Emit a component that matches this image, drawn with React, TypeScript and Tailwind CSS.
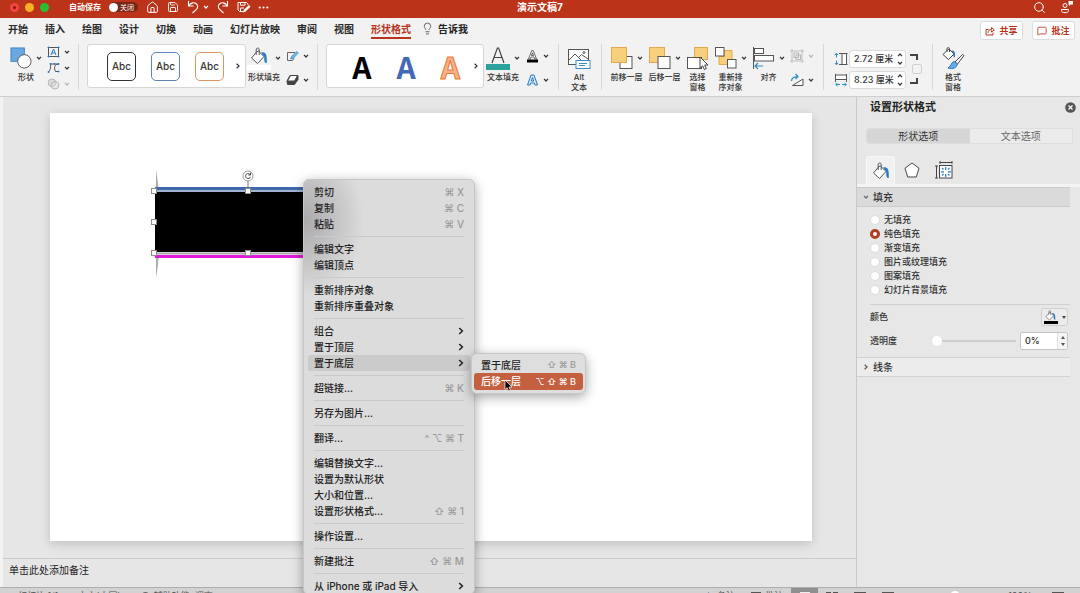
import React, { Fragment, ReactNode } from "react";
import {
  Ellipsis,
  House,
  Lightbulb,
  MessageSquare,
  Save,
  Search,
} from "lucide-react";

type MenuEntry = {
  label: string;
  keys?: string;
  submenu?: boolean;
  active?: boolean;
};

const tabs = [
  "开始",
  "插入",
  "绘图",
  "设计",
  "切换",
  "动画",
  "幻灯片放映",
  "审阅",
  "视图",
  "形状格式",
];

const menuGroups: MenuEntry[][] = [
  [
    { label: "剪切", keys: "⌘ X" },
    { label: "复制", keys: "⌘ C" },
    { label: "粘贴", keys: "⌘ V" },
  ],
  [{ label: "编辑文字" }, { label: "编辑顶点" }],
  [{ label: "重新排序对象" }, { label: "重新排序重叠对象" }],
  [
    { label: "组合", submenu: true },
    { label: "置于顶层", submenu: true },
    { label: "置于底层", submenu: true, active: true },
  ],
  [{ label: "超链接...", keys: "⌘ K" }],
  [{ label: "另存为图片..." }],
  [{ label: "翻译...", keys: "^ ⌥ ⌘ T" }],
  [
    { label: "编辑替换文字..." },
    { label: "设置为默认形状" },
    { label: "大小和位置..." },
    { label: "设置形状格式...", keys: "⇧ ⌘ 1" },
  ],
  [{ label: "操作设置..." }],
  [{ label: "新建批注", keys: "⇧ ⌘ M" }],
  [{ label: "从 iPhone 或 iPad 导入", submenu: true }],
];

const fillOptions = [
  "无填充",
  "纯色填充",
  "渐变填充",
  "图片或纹理填充",
  "图案填充",
  "幻灯片背景填充",
];

const Chevron = ({ className = "" }: { className?: string }) => (
  <svg viewBox="0 0 6 6" className={`h-1.5 w-1.5 shrink-0 ${className}`} fill="none" stroke="currentColor" strokeWidth="1.2">
    <path d="M1 1.8 3 4l2-2.2" />
  </svg>
);

const ChevronRight = ({ className = "" }: { className?: string }) => (
  <svg viewBox="0 0 6 8" className={`h-2 w-1.5 shrink-0 ${className}`} fill="none" stroke="currentColor" strokeWidth="1.5">
    <path d="M1.2 1 4.4 4 1.2 7" />
  </svg>
);

const Divider = () => <div className="h-[46px] w-px shrink-0 bg-[#d8d8d8]" />;

const BigTool = ({ label, children, arrow = true }: { label: string; children: ReactNode; arrow?: boolean }) => (
  <button className="flex shrink-0 flex-col items-center pt-0.5">
    <span className="flex h-6 items-center gap-1">
      {children}
      {arrow && <Chevron />}
    </span>
    <span className="mt-0.5 whitespace-pre text-[8px] font-medium leading-[10px]">{label}</span>
  </button>
);

const SmallTool = ({ name, children, muted }: { name: string; children: ReactNode; muted?: boolean }) => (
  <button aria-label={name} className={`flex flex-1 items-center gap-1 ${muted ? "text-[#b5b5b5]" : ""}`}>
    {children}
    <Chevron />
  </button>
);

const Bucket = ({ className }: { className: string }) => (
  <svg viewBox="0 0 18 18" className={className} fill="none">
    <path d="M7 4.5 1.5 11 7.5 16.5 14 9.5 8.6 4.2Z" fill="#fff" stroke="#555" strokeWidth="1" />
    <path d="M6.2 8V2.8c0-2.4 3-2.4 3 0V8" stroke="#555" strokeWidth="1" />
    <path d="M11 5.5c4.500-1.500 6.300 1.500 5.800 10.500-2 0-2.800-1-2.600-6.500Z" fill="#2b7cc4" />
  </svg>
);

const TitleBar = () => (
  <header className="grid h-[18px] shrink-0 grid-cols-[1fr_auto_1fr] items-center bg-[#bb341a] pb-1.5 text-white">
    <div className="flex items-center pl-2.5">
      <span className="flex gap-1.5">
        <span className="flex size-[9px] items-center justify-center rounded-full bg-[#f4443f]">
          <span className="size-[3px] rounded-full bg-[#7d1712]" />
        </span>
        <span className="size-[9px] rounded-full bg-[#fbb024]" />
        <span className="size-[9px] rounded-full bg-[#28bd35]" />
      </span>
      <span className="ml-5 text-[8px] font-bold leading-3">自动保存</span>
      <button role="switch" aria-checked="false" aria-label="自动保存" className="ml-2 flex h-2.5 w-[29px] items-center gap-0.5 rounded-full bg-[#7a2614]">
        <span className="size-[9px] rounded-full bg-white" />
        <span className="text-[7px] leading-[9px]">关闭</span>
      </button>
      <button aria-label="主页" className="ml-2"><House size={13} strokeWidth={1.8} /></button>
      <button aria-label="保存" className="ml-2"><Save size={12} strokeWidth={1.8} /></button>
      <button aria-label="撤消" className="ml-2">
        <svg viewBox="0 0 12 14" className="h-3.5 w-3" fill="none" stroke="currentColor" strokeWidth="1.100">
          <path d="M1.500 1v5h5M1.800 5.800C4 2.500 7 2 9 3.500s2.300 4 .5 5.800L5.500 13" />
        </svg>
      </button>
      <Chevron className="ml-1" />
      <button aria-label="重做" className="ml-2">
        <svg viewBox="0 0 12 14" className="h-3.5 w-3" fill="none" stroke="currentColor" strokeWidth="1.100">
          <path d="M10.500 1v5h-5M10.200 5.800C8 2.500 5 2 3 3.500s-2.300 4-.5 5.800L6.500 13" />
        </svg>
      </button>
      <button aria-label="另存为" className="ml-2">
        <svg viewBox="0 0 14 12" className="h-3 w-3.5" fill="none" stroke="currentColor">
          <path d="M6 10.500H2.500L1 9V1.500h8.500l1.500 1.500v1M3.500 1.500v2.700h4.500V1.500M3.500 10V7H7" />
          <path d="M6 11.500 6.800 8.800 12 4l1.500 1.700-5.200 5Z" fill="currentColor" stroke="none" />
        </svg>
      </button>
      <button aria-label="更多" className="ml-1.5"><Ellipsis size={13} /></button>
    </div>
    <h1 className="text-[10px] font-bold leading-3">演示文稿7</h1>
    <div className="flex items-center justify-end gap-3.5 pr-1.5">
      <button aria-label="搜索"><Search size={13} strokeWidth={1.8} /></button>
      <button aria-label="共同创作">
        <svg viewBox="0 0 14 14" className="size-3.5" fill="none" stroke="currentColor">
          <circle cx="5" cy="5.500" r="2" />
          <path d="M1.500 9.500h7v1.200c0 2.600-7 2.600-7 0Z" />
          <path d="M8.500 1h4.500v3.500h-2.500L9 6V4.500h-.5Z" fill="currentColor" stroke="none" />
        </svg>
      </button>
    </div>
  </header>
);

const TabBar = () => (
  <nav className="flex h-[22px] shrink-0 items-start justify-between pl-2 pr-[5px] text-[10px] font-bold leading-[14px]">
    <div className="flex gap-[17px] pt-1">
      {tabs.map((tab) => (
        <a
          key={tab}
          href="#"
          className={
            tab === "形状格式"
              ? "h-[17px] border-b-2 border-[#b8351c] text-[#b8351c]"
              : "text-[#2a2a2a]"
          }
        >
          {tab}
        </a>
      ))}
      <a href="#" className="-ml-[7px] flex gap-1">
        <Lightbulb size={13} strokeWidth={1.6} className="text-[#555]" />
        告诉我
      </a>
    </div>
    <div className="flex gap-[9px] pt-[3px] text-[9px] text-[#b8351c]">
      <button className="flex h-[19px] w-[43px] items-center justify-center gap-1 rounded-[3px] border border-[#dcdcdc] bg-white">
        <svg viewBox="0 0 10 10" className="size-2.5" fill="none" stroke="currentColor">
          <path d="M3.500 3.500h-2.500v5.500h7V6.500M3 7c.2-2.500 1.500-3.500 3.500-3.500V1.500L9.300 4 6.500 6V4.500" />
        </svg>
        共享
      </button>
      <button className="flex h-[19px] w-[43px] items-center justify-center gap-1 rounded-[3px] border border-[#dcdcdc] bg-white">
        <MessageSquare size={10} />
        批注
      </button>
    </div>
  </nav>
);

const SizeField = ({ name, value, children }: { name: string; value: string; children: ReactNode }) => (
  <label className="flex h-[18px] items-center gap-px">
    {children}
    <span className="flex h-[18px] w-[57px] items-center justify-between rounded-[3px] border border-[#dadada] bg-white pl-1 pr-0.5">
      <input aria-label={name} defaultValue={value} className="w-11 min-w-0 bg-transparent text-[9px] font-medium outline-none" />
      <span className="flex flex-col gap-0.5">
        <Chevron className="rotate-180" />
        <Chevron />
      </span>
    </span>
  </label>
);

const Ribbon = () => (
  <section className="flex h-[57px] shrink-0 items-start overflow-hidden border-b border-[#cfcfcf] pl-2.5 pt-1 text-[#333]">
    <BigTool label="形状">
      <svg viewBox="0 0 23 24" className="h-6 w-[22px]">
        <rect x="1" y="1.500" width="14" height="14" fill="#69a8e0" stroke="#3f83c4" />
        <circle cx="15" cy="15.500" r="7" fill="#fff" stroke="#555" />
      </svg>
    </BigTool>
    <div className="ml-[5px] flex h-12 shrink-0 flex-col">
      <SmallTool name="文本框">
        <svg viewBox="0 0 13 12" className="h-3 w-[13px]" fill="none" stroke="#555">
          <rect x="1.500" y="1.500" width="10" height="9" />
          <path d="M4 9 6.500 3 9 9M5 7h3" stroke="#2b7cc4" />
          <path d="M1 1h1v1H1zM11 1h1v1h-1zM1 10h1v1H1zM11 10h1v1h-1z" stroke="#2b7cc4" />
        </svg>
      </SmallTool>
      <SmallTool name="编辑形状">
        <svg viewBox="0 0 13 12" className="h-3 w-[13px]" fill="none" stroke="#555">
          <path d="M3.500 2h8M11 2C7 3 7 6 8.500 9.500H11M1.500 10C3.500 8 4 5 3.500 2" />
          <path d="M3 1.500h1v1H3zM11 1.500h1v1h-1zM1 9.500h1v1H1zM11 9h1v1h-1zM7 1.500h1v1H7z" stroke="#2b7cc4" />
        </svg>
      </SmallTool>
      <SmallTool name="合并形状" muted>
        <svg viewBox="0 0 13 12" className="h-3 w-[13px]" fill="#ddd" stroke="currentColor">
          <circle cx="5" cy="4.800" r="3.800" />
          <circle cx="8" cy="7.200" r="3.800" fillOpacity=".5" />
        </svg>
      </SmallTool>
    </div>
    <div className="mx-2"><Divider /></div>

    <div className="flex h-11 w-[159px] shrink-0 items-center justify-end gap-[15px] rounded-[3px] border border-[#d6d6d6] bg-white pr-1 font-medium">
      <button className="size-[29px] rounded-[5px] border border-[#333] text-[10px]">Abc</button>
      <button className="size-[29px] rounded-[5px] border border-[#5f82ba] text-[10px]">Abc</button>
      <button className="size-[29px] rounded-[5px] border border-[#e09560] text-[10px]">Abc</button>
      <button aria-label="更多样式" className="-ml-1"><ChevronRight className="scale-75" /></button>
    </div>
    <div className="ml-px flex shrink-0">
      <BigTool label="形状填充">
        <span className="flex w-6 flex-col items-center">
          <Bucket className="size-[18px]" />
          <span className="h-[5px] w-6 bg-white" />
        </span>
      </BigTool>
    </div>
    <div className="ml-[5px] flex h-12 shrink-0 flex-col">
      <SmallTool name="形状轮廓">
        <svg viewBox="0 0 13 12" className="h-3 w-[13px]" fill="none" stroke="#666">
          <path d="M9 2.500H1.500v8h5L8 8" />
          <path d="M4.500 9 6 6l5-4.500 1.200 1.500L7.500 8Z" fill="#79c0e8" stroke="#2b8cc4" strokeWidth=".8" />
        </svg>
      </SmallTool>
      <SmallTool name="形状效果">
        <svg viewBox="0 0 13 12" className="h-3 w-[13px]">
          <path d="M4 1.500h8v4L8.500 10.500H1.500L1 7Z" fill="#444" stroke="#444" strokeLinejoin="round" />
          <path d="M4.500 1.500h7L8.500 7H1.500Z" fill="#fff" stroke="#444" strokeLinejoin="round" />
        </svg>
      </SmallTool>
    </div>
    <div className="mx-2"><Divider /></div>

    <div className="flex h-11 w-[158px] shrink-0 items-center justify-end gap-[25px] rounded-[3px] border border-[#d6d6d6] bg-white pr-1 font-['Noto_Sans_CJK_SC',sans-serif] text-[30px] font-bold leading-[44px]">
      <button className="text-black">A</button>
      <button className="text-[#4468b8]">A</button>
      <button className="text-[#f7b184] [-webkit-text-stroke:1px_#ea7a3c]">A</button>
      <button aria-label="更多艺术字" className="-ml-3"><ChevronRight className="scale-75" /></button>
    </div>
    <div className="ml-0.5 flex shrink-0">
      <BigTool label="文本填充">
        <span className="flex w-6 flex-col items-center">
          <svg viewBox="0 0 14 18" className="h-[18px] w-3.5" fill="none" stroke="#444" strokeWidth="1.200">
            <path d="M1 17 6.400 2h1.200L13 17M3.200 11.500h7.600" />
          </svg>
          <span className="h-1.5 w-6 bg-[#2ba29c]" />
        </span>
      </BigTool>
    </div>
    <div className="ml-1.5 flex h-12 shrink-0 flex-col">
      <SmallTool name="文本轮廓">
        <svg viewBox="0 0 13 14" className="h-3.5 w-[13px]" fill="#fff" stroke="#444" strokeWidth=".8">
          <path d="M2.500 10 5.800 1.500h1.400L10.500 10H8.800L8 8H5L4.200 10ZM5.500 6.500h2L6.500 3.800Z" />
          <path d="M1 10.500h11v3H1z" fill="#000" stroke="none" />
        </svg>
      </SmallTool>
      <SmallTool name="文本效果">
        <svg viewBox="0 0 13 12" className="h-3 w-[13px]" fill="#d5eaf8" stroke="#2878bd">
          <path d="M1.500 11 5 1h3l3.500 10H9L8.300 9H4.700L4 11ZM5.300 7h2.400L6.500 3.500Z" />
        </svg>
      </SmallTool>
    </div>
    <div className="ml-[9px] mr-2"><Divider /></div>

    <BigTool label={"Alt\n文本"} arrow={false}>
      <svg viewBox="0 0 24 24" className="size-6" fill="none" stroke="#555">
        <rect x="1.500" y="3.500" width="20" height="15" fill="#fff" />
        <path d="M2 14 8 8l6 6M11 12l3.500-3.500L21 13" />
        <circle cx="17" cy="6.500" r="1" />
        <rect x="9" y="14.500" width="14" height="8" fill="#fff" stroke="#3a8fcb" />
        <path d="M12 17.500h8M12 19.500h6" stroke="#3a8fcb" />
      </svg>
    </BigTool>
    <div className="ml-2.5 mr-2"><Divider /></div>

    <div className="flex shrink-0 gap-[5px]">
      <BigTool label="前移一层">
        <svg viewBox="0 0 23 24" className="h-6 w-[23px]">
          <rect x="10" y="10.500" width="12" height="12" fill="#fff" stroke="#555" />
          <rect x="1.500" y="1.500" width="15" height="15" fill="#f8cf7d" stroke="#e2aa4e" />
        </svg>
      </BigTool>
      <BigTool label="后移一层">
        <svg viewBox="0 0 23 24" className="h-6 w-[23px]">
          <rect x="1.500" y="1.500" width="15" height="15" fill="#f8cf7d" stroke="#e2aa4e" />
          <rect x="10" y="10.500" width="12" height="12" fill="#fff" stroke="#555" />
        </svg>
      </BigTool>
      <BigTool label={"选择\n窗格"} arrow={false}>
        <svg viewBox="0 0 23 24" className="h-6 w-[23px]">
          <rect x="8.500" y="1.500" width="13" height="12" fill="#f8cf7d" stroke="#e2aa4e" />
          <rect x="1.500" y="11.500" width="14" height="11" fill="#fff" stroke="#555" />
          <path d="M14 11v11l2.700-2.200 1.600 3.700 2-.9-1.600-3.600H22Z" fill="#fff" stroke="#444" />
        </svg>
      </BigTool>
      <BigTool label={"重新排\n序对象"}>
        <svg viewBox="0 0 23 24" className="h-6 w-[23px]">
          <path d="M10 4.500h8v14H5v-8h5Z" fill="#f8cf7d" stroke="#e2aa4e" />
          <rect x="1.500" y="1.500" width="8.500" height="8.500" fill="#fff" stroke="#555" />
          <rect x="13.500" y="13.500" width="8.500" height="8.500" fill="#fff" stroke="#555" />
        </svg>
      </BigTool>
      <BigTool label="对齐">
        <svg viewBox="0 0 23 24" className="h-6 w-[23px]" fill="#fff" stroke="#555">
          <path d="M1.500 1v22" />
          <rect x="2.500" y="2.500" width="9" height="5" />
          <rect x="2.500" y="9.500" width="19" height="5.500" />
          <path d="M11 20H3M6 17l-3 3 3 3" fill="none" stroke="#2b8cc4" strokeWidth="1.200" />
        </svg>
      </BigTool>
      <div className="flex h-12 flex-col">
        <SmallTool name="组合" muted>
          <svg viewBox="0 0 14 14" className="size-3.5" fill="none" stroke="currentColor">
            <path d="M2 0v14M12 0v14M0 2h14M0 12h14" strokeWidth=".8" />
            <rect x="4" y="4" width="4.500" height="4.500" />
            <rect x="6" y="6" width="4.500" height="4.500" />
          </svg>
        </SmallTool>
        <SmallTool name="旋转">
          <svg viewBox="0 0 14 14" className="size-3.5" fill="none" stroke="#555">
            <path d="M2.500 12.500h10.500V6Z" fill="#fff" />
            <path d="M1.500 8c0-3 2.500-4.500 6-4M5.500 1l2.500 2.600L5.500 6" stroke="#2b8cc4" strokeWidth="1.200" />
          </svg>
        </SmallTool>
      </div>
    </div>
    <div className="ml-[9px] mr-2.5"><Divider /></div>

    <div className="flex shrink-0 flex-col gap-[3px] pt-1.5">
      <SizeField name="高度" value="2.72 厘米">
        <svg viewBox="0 0 14 14" className="size-3.5" fill="none" stroke="#555">
          <path d="M5 1.500h8.500M5 12.500h8.500" />
          <rect x="8" y="1.500" width="4.500" height="11" fill="#fff" />
          <path d="M2.500 1.500v4M2.500 8.500v4M1 3l1.500-1.800L4 3M1 11l1.500 1.800L4 11" stroke="#2b8cc4" />
        </svg>
      </SizeField>
      <SizeField name="宽度" value="8.23 厘米">
        <svg viewBox="0 0 14 14" className="size-3.5" fill="none" stroke="#555">
          <path d="M1.500 1v8M12.500 1v8" />
          <rect x="1.500" y="2" width="11" height="4.500" fill="#fff" />
          <path d="M2 11.500h4M8 11.500h4M3.500 10 1.600 11.500 3.500 13M10.500 10l1.900 1.500-1.900 1.500" stroke="#2b8cc4" />
        </svg>
      </SizeField>
    </div>
    <label className="ml-1 flex shrink-0 flex-col pt-2.5">
      <span className="h-1.5 w-2 border-r-2 border-t-2 border-[#444]" />
      <span className="flex py-1 pl-0.5">
        <input type="checkbox" aria-label="锁定纵横比" className="size-2.5 appearance-none rounded-[2px] border border-[#d0d0d0] bg-[#f3f3f3]" />
      </span>
      <span className="h-1.5 w-2 border-b-2 border-r-2 border-[#444]" />
    </label>
    <div className="ml-2.5 mr-2"><Divider /></div>
    <BigTool label={"格式\n窗格"} arrow={false}>
      <svg viewBox="0 0 24 24" className="size-6" fill="none">
        <path d="M7 3.500 2 8.500l5.500 5L13 8 8 3Z" fill="#fff" stroke="#444" />
        <path d="M6 6V3c0-2 2.500-2 2.500 0v3" stroke="#444" />
        <path d="M10.500 4.500c3 0 4 1.500 3.500 7-1.500-.5-2-1.500-1.700-4Z" fill="#2b7cc4" />
        <path d="m14 16 7.500-7.500 1.500 1-6.500 8.500Z" fill="#fff" stroke="#444" />
        <path d="M13 15.500c-2.500.5-2.500 4-6 6.500 5 1.500 8.500 0 9.500-4Z" fill="#69a8e0" stroke="#2b7cc4" />
      </svg>
    </BigTool>
  </section>
);

const Handle = ({ className }: { className: string }) => (
  <span className={`absolute size-1.5 border border-[#8d8d8d] bg-white ${className}`} />
);

const Slide = () => (
  <div className="relative flex-1 bg-white shadow-[0_3px_10px_rgba(0,0,0,0.16)]">
    <svg viewBox="0 0 6 108" className="absolute left-[104px] top-[57px] h-[108px] w-1.5">
      <path d="M2 0C3 6 4 12 4.500 20H2ZM2 108c1-6 2-12 2.500-20H2Z" fill="#a9adaf" />
    </svg>
    <div className="absolute left-[105px] top-[74px] w-[186px] border-t-[3px] border-[#4069a8] bg-[#a3b2d0] pt-0.5">
      <div className="h-[60px] bg-black" />
      <div className="h-[3px] border-y border-[#d5cfd8] bg-[#aaa]" />
      <div className="h-[3px] bg-[#e21bd9]" />
    </div>
    <Handle className="left-[101px] top-[75px]" />
    <Handle className="left-[195px] top-[75px]" />
    <Handle className="left-[101px] top-[106px]" />
    <Handle className="left-[101px] top-[137px]" />
    <Handle className="left-[195px] top-[137px]" />
    <svg viewBox="0 0 12 18" className="absolute left-[192px] top-[57px] h-[18px] w-3" fill="none" stroke="#777">
      <path d="M6 11v7" />
      <circle cx="6" cy="6" r="5" fill="#fff" stroke="#999" />
      <path d="M8.300 4.800a2.500 2.500 0 1 0 .2 2M8.500 2.800v2.200H6.300" stroke="#444" />
    </svg>
  </div>
);

const FormatPane = () => (
  <aside className="flex w-56 shrink-0 flex-col border-l border-[#c9c9c9] bg-[#e7e7e7] text-[#333]">
    <div className="flex items-center justify-between pl-[13px] pr-1 pt-0.5">
      <h2 className="text-[11px] font-bold leading-4 text-[#222]">设置形状格式</h2>
      <button aria-label="关闭" className="text-[#555]">
        <svg viewBox="0 0 11 11" className="size-[11px]">
          <circle cx="5.500" cy="5.500" r="5.300" fill="currentColor" />
          <path d="m3.500 3.500 4 4m0-4-4 4" stroke="#fff" strokeWidth="1.200" />
        </svg>
      </button>
    </div>
    <div className="ml-[9px] mr-[7px] mt-[13px] grid h-4 grid-cols-2 overflow-hidden rounded-[3px] border border-[#dedede] text-[10px] leading-[14px]">
      <button className="bg-[#d6d6d6]">形状选项</button>
      <button className="bg-[#ebebeb] text-[#666]">文本选项</button>
    </div>
    <div className="mt-3 flex border-b-[3px] border-[#f4f4f4] pl-[9px]">
      <button aria-label="填充与线条" className="flex h-7 w-[29px] items-center justify-center rounded-t-[3px] border border-b-0 border-[#f8f8f8] bg-[#f1f1f1]">
        <Bucket className="size-[18px]" />
      </button>
      <button aria-label="效果" className="ml-2 flex w-[18px] items-center justify-center">
        <svg viewBox="0 0 16 16" className="size-4" fill="#fff" stroke="#444" strokeLinejoin="round">
          <path d="m8 1 7 5.200L12.300 15H3.700L1 6.200Z" />
        </svg>
      </button>
      <button aria-label="大小与属性" className="ml-3.5 flex w-[18px] items-center justify-center">
        <svg viewBox="0 0 18 18" className="size-[18px]" fill="none" stroke="#444">
          <path d="M5 1.500h12M5 0v3M17 0v3M1.500 5v12M0 5h3M0 17h3" />
          <rect x="4.500" y="4.500" width="12.500" height="12.500" fill="#fff" />
          <path d="M10.700 9V6m0 10v-3M9 10.800H6m10 0h-3M7 7l1.500 1.500M14.500 7 13 8.500M7 14.500 8.500 13m6 1.500L13 13" stroke="#2b7cc4" strokeWidth="1.200" />
        </svg>
      </button>
    </div>
    <div className="mr-2.5">
      <button className="flex h-5 w-full items-center gap-1 border-y border-[#cccccc] bg-[#dadada] pl-1.5 text-[10px] font-medium">
        <Chevron className="text-[#666]" />
        填充
      </button>
      <div className="ml-[13px] flex flex-col border-b border-[#d0d0d0] pb-[7px] pt-1.5 text-[9px] font-medium leading-[14px]">
        {fillOptions.map((option) => (
          <label key={option} className="flex h-3.5 items-center gap-1">
            <input
              type="radio"
              name="fill"
              defaultChecked={option === "纯色填充"}
              className="size-2.5 appearance-none rounded-full border border-[#dcdcdc] bg-white checked:border-[3px] checked:border-[#b03d20]"
            />
            {option}
          </label>
        ))}
      </div>
      <div className="ml-[13px] flex h-6 items-center justify-between pr-0.5 text-[9px] font-medium">
        颜色
        <button aria-label="颜色" className="flex h-[18px] w-[27px] items-center justify-center gap-1 rounded-[3px] border border-[#cfcfcf] bg-[#ececec]">
          <span className="flex flex-col items-center">
            <Bucket className="size-[11px]" />
            <span className="h-[3px] w-3.5 bg-black" />
          </span>
          <span className="border-x-2 border-t-[3px] border-x-transparent border-t-[#444]" />
        </button>
      </div>
      <div className="ml-[13px] flex h-6 items-center pr-0.5 text-[9px] font-medium">
        <label htmlFor="opacity" className="w-[62px] shrink-0">透明度</label>
        <input
          id="opacity"
          type="range"
          defaultValue={0}
          className="h-2.5 min-w-0 flex-1 appearance-none bg-transparent [&::-webkit-slider-runnable-track]:h-0.5 [&::-webkit-slider-runnable-track]:bg-[#cfcfcf] [&::-webkit-slider-thumb]:-mt-1 [&::-webkit-slider-thumb]:size-2.5 [&::-webkit-slider-thumb]:appearance-none [&::-webkit-slider-thumb]:rounded-full [&::-webkit-slider-thumb]:bg-white"
        />
        <span className="ml-1 flex h-[18px] w-12 items-center rounded-[2px] border border-[#c4c4c4] bg-white">
          <input aria-label="透明度百分比" defaultValue="0%" className="w-0 min-w-0 flex-1 pl-1 outline-none" />
          <span className="flex h-full w-2.5 flex-col items-center justify-center gap-1 border-l border-[#e0e0e0] bg-[#f5f5f5]">
            <span className="border-x-2 border-b-[3px] border-x-transparent border-b-[#555]" />
            <span className="border-x-2 border-t-[3px] border-x-transparent border-t-[#555]" />
          </span>
        </span>
      </div>
      <button className="mt-1 flex h-5 w-full items-center gap-1 border-y border-[#d2d2d2] bg-[#ececec] pl-1.5 text-[10px] font-medium">
        <ChevronRight className="scale-75 text-[#555]" />
        线条
      </button>
    </div>
  </aside>
);

const StatusBar = () => (
  <footer className="flex h-1.5 shrink-0 items-start overflow-hidden border-t border-[#aeaeae] bg-[#d2d2d2] pl-[18px] pt-[3px] text-[9px] leading-[9px] text-[#555]">
    <span>幻灯片 1/1</span>
    <span className="ml-5">中文(中国)</span>
    <span className="ml-5 mt-px size-[9px] shrink-0 rounded-full border-2 border-[#666]" />
    <span className="ml-1">辅助功能: 调查</span>
    <span className="ml-auto mt-px size-[9px] shrink-0 bg-[#555] [clip-path:polygon(50%_0,100%_100%,0_100%)]" />
    <span className="ml-1">备注</span>
    <span className="ml-4 mt-px h-2 w-2.5 shrink-0 bg-[#555]" />
    <span className="ml-1">批注</span>
    <span className="-mt-[3px] ml-2 flex h-3 w-[27px] shrink-0 justify-center bg-[#8f8f8f] pt-1">
      <span className="h-2 w-2.5 border border-[#eee]" />
    </span>
    <span className="ml-2 mt-px h-2 w-3 shrink-0 border-x-[5px] border-[#555]" />
    <span className="ml-4 mt-px h-2 w-3 shrink-0 border border-[#555]" />
    <span className="ml-4 mt-px h-2 w-3 shrink-0 bg-[#555]" />
    <span className="ml-14 size-2.5 shrink-0 rounded-full bg-white" />
    <span className="ml-12">100%</span>
    <span className="ml-5 mr-4 mt-px h-2 w-3 shrink-0 border border-[#555]" />
  </footer>
);

const ContextMenu = () => (
  <div
    role="menu"
    className="absolute left-[303px] top-[179px] w-[172px] rounded-md border border-[#c6c6c6] bg-[#dcdcdc] bg-[radial-gradient(ellipse_60px_75px_at_0px_40px,#aaa9ac,#bfbec0_45%,transparent)] px-1 pt-1 text-[10px] font-medium leading-4 text-[#222] shadow-[0_3px_12px_rgba(0,0,0,0.35)]"
  >
    {menuGroups.map((group, index) => (
      <Fragment key={group[0].label}>
        {index > 0 && <hr className="mx-1.5 my-1 border-[#c9c9c9]" />}
        {group.map((item) => (
          <button
            key={item.label}
            role="menuitem"
            className={`flex h-4 w-full items-center justify-between rounded-[3px] px-1.5 ${item.active ? "bg-[#cbcbcb]" : ""}`}
          >
            <span>{item.label}</span>
            {item.keys && <span className="text-[10px] text-[#999]">{item.keys}</span>}
            {item.submenu && <ChevronRight />}
          </button>
        ))}
      </Fragment>
    ))}
  </div>
);

const Submenu = () => (
  <div
    role="menu"
    className="absolute left-[471px] top-[353px] w-[115px] rounded-md border border-[#c6c6c6] bg-[#dedede] px-0.5 py-[3px] text-[10px] font-medium text-[#222] shadow-[0_3px_12px_rgba(0,0,0,0.35)]"
  >
    <button role="menuitem" className="flex h-4 w-full items-center justify-between rounded-[3px] px-[7px]">
      置于底层
      <span className="text-[9px] text-[#999]">⇧ ⌘ B</span>
    </button>
    <button role="menuitem" className="flex h-[17px] w-full items-center justify-between rounded-[3px] bg-[#c4603f] px-[7px] text-white">
      后移一层
      <span className="text-[9px]">⌥ ⇧ ⌘ B</span>
    </button>
    <svg viewBox="0 0 9 13" className="absolute left-8 top-[25px] h-[13px] w-[9px]">
      <path d="M1 1v9.500l2.200-1.800L4.600 12l1.800-.8L5 8h3Z" fill="#000" stroke="#fff" strokeWidth=".7" />
    </svg>
  </div>
);

const App = () => (
  <main className="relative flex h-screen flex-col overflow-hidden bg-[#f2f2f2] font-['Inter','Noto_Sans_CJK_SC',sans-serif] text-[#222]">
    <TitleBar />
    <TabBar />
    <Ribbon />
    <div className="flex min-h-0 flex-1">
      <div className="flex min-w-0 flex-1 flex-col border-l-[3px] border-[#f3f3f3] bg-[#e6e6e6]">
        <div className="flex min-h-0 flex-1 pb-[17px] pl-[47px] pr-11 pt-4">
          <Slide />
        </div>
        <textarea
          aria-label="备注"
          defaultValue="单击此处添加备注"
          className="block h-[29px] shrink-0 resize-none overflow-hidden border-t border-[#cbcbcb] bg-transparent px-1.5 pt-1 font-['Liberation_Serif','Noto_Sans_CJK_SC',serif] text-[10px] leading-4 outline-none"
        />
      </div>
      <FormatPane />
    </div>
    <StatusBar />
    <ContextMenu />
    <Submenu />
  </main>
);

export default App;
